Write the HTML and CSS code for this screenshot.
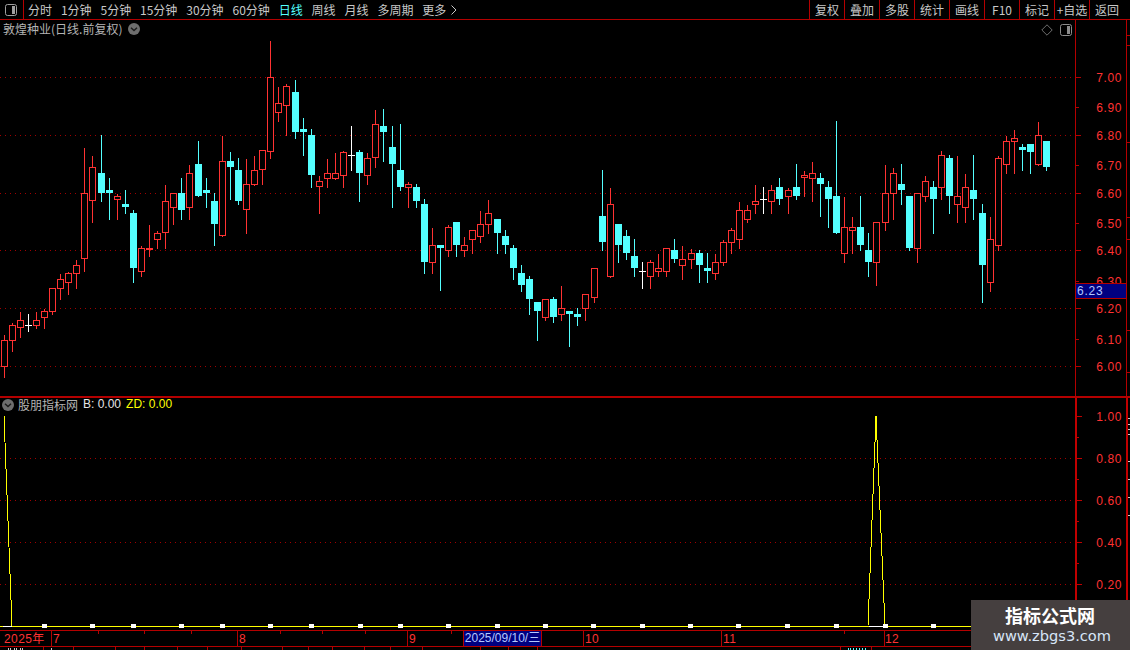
FILE: index.html
```html
<!DOCTYPE html>
<html lang="zh">
<head>
<meta charset="utf-8">
<title>敦煌种业</title>
<link rel="stylesheet" href="styles.css">
</head>
<body>
<div class="app">
  <header class="toolbar">
    <div class="layout-cell">
      <svg class="icon-layout" viewBox="0 0 12 12" width="12" height="12"><rect x="0.5" y="0.5" width="11" height="11" rx="2" fill="none" stroke="#a0a0a0"/><rect x="7" y="2" width="3" height="8" fill="#a0a0a0"/></svg>
    </div>
    <nav class="periods">
      <span class="period">分时</span><span class="period">1分钟</span><span class="period">5分钟</span><span class="period">15分钟</span><span class="period">30分钟</span><span class="period">60分钟</span><span class="period active">日线</span><span class="period">周线</span><span class="period">月线</span><span class="period">多周期</span>
      <span class="period more">更多<svg viewBox="0 0 6 10" width="6" height="10"><path d="M.5.5 5 5 .5 9.5" fill="none" stroke="#c8c8c8"/></svg></span>
    </nav>
    <div class="actions">
      <span class="action">复权</span><span class="action">叠加</span><span class="action">多股</span><span class="action">统计</span><span class="action">画线</span><span class="action">F10</span><span class="action">标记</span><span class="action">+自选</span><span class="action">返回</span>
    </div>
  </header>

  <section class="panel panel-main">
    <div class="plot">
      <svg id="kline" class="canvas" width="1075" height="376"></svg>
      <div class="legend">
        <span class="title">敦煌种业(日线.前复权)</span>
        <svg class="icon-circle" viewBox="0 0 12 12" width="12" height="12"><circle cx="6" cy="6" r="6" fill="#6e6e6e"/><path d="M3 4.8 6 7.6 9 4.8" fill="none" stroke="#1c1c1c" stroke-width="1.4"/></svg>
      </div>
      <div class="plot-tools">
        <svg viewBox="0 0 12 12" width="12" height="12"><path d="M6 .8 11.2 6 6 11.2 .8 6Z" fill="none" stroke="#6e6e6e"/></svg>
        <svg viewBox="0 0 12 12" width="12" height="12"><rect x="0.5" y="0.5" width="11" height="11" rx="2" fill="none" stroke="#8c8c8c"/><rect x="7" y="2" width="3" height="8" fill="#8c8c8c"/></svg>
      </div>
    </div>
    <div class="axis"><svg id="axis-main" class="canvas" width="50" height="376"></svg><div class="price-tag">6.23</div></div>
    <div class="edge"><svg id="edge-main" class="canvas" width="4" height="376"></svg></div>
  </section>

  <section class="panel panel-sub">
    <div class="plot">
      <svg id="indicator" class="canvas" width="1075" height="232"></svg>
      <div class="legend legend-sub">
        <svg class="icon-circle" viewBox="0 0 12 12" width="12" height="12"><circle cx="6" cy="6" r="6" fill="#6e6e6e"/><path d="M3 4.8 6 7.6 9 4.8" fill="none" stroke="#1c1c1c" stroke-width="1.4"/></svg>
        <span class="title">股朋指标网</span>
        <span class="val-b">B: 0.00</span>
        <span class="val-zd">ZD: 0.00</span>
      </div>
    </div>
    <div class="axis"><svg id="axis-sub" class="canvas" width="49" height="232"></svg></div>
    <div class="edge"><svg id="edge-sub" class="canvas" width="3" height="232"></svg></div>
  </section>

  <footer class="timeline">
    <svg id="time-ticks" class="canvas" width="1130" height="15"></svg>
    <div class="date-tag">2025/09/10/三</div>
  </footer>
  <div class="statusbar"><svg id="status" class="canvas" width="1130" height="3"></svg></div>

  <aside class="watermark">
    <div class="wm-title">指标公式网</div>
    <div class="wm-url">www.zbgs3.com</div>
  </aside>
</div>
<script src="chart.js"></script>
</body>
</html>
```
FILE: styles.css
```css
* { box-sizing: border-box; }
html, body { margin: 0; height: 100%; background: #000; overflow: hidden; }
body { font-family: "Noto Sans CJK SC", "Liberation Sans", sans-serif; font-size: 12px; color: #c8c8c8; }
.app { position: relative; width: 1130px; height: 650px; display: flex; flex-direction: column; overflow: hidden; }
.canvas { display: block; }

.toolbar { height: 20px; flex: none; display: flex; border-bottom: 1px solid #b40000; line-height: 19px; }
.layout-cell { width: 24px; flex: none; display: flex; align-items: center; justify-content: center; border-right: 1px solid #b40000; padding-right: 1px; }
.periods { display: flex; flex: 1; padding-left: 4px; gap: 8.9px; white-space: nowrap; }
.period { color: #c8c8c8; }
.period.active { color: #54ffff; }
.period.more { display: flex; align-items: center; gap: 5px; }
.actions { display: flex; flex: none; }
.action { width: 35px; text-align: center; border-left: 1px solid #b40000; white-space: nowrap; }
.action:last-child { width: 41px; padding-right: 6px; }

.panel { flex: none; display: flex; border-bottom: 1px solid #b40000; }
.panel-main { height: 378px; border-bottom-width: 2px; }
.panel-sub { height: 233px; }
.plot { position: relative; width: 1075px; flex: none; }
.axis { position: relative; flex: none; border-left: 1px solid #b40000; border-right: 1px solid #b40000; box-sizing: content-box; width: 50px; }
.panel-sub .axis { border-left-width: 2px; border-right-width: 2px; width: 49px; border-color: #c00000; }
.edge { flex: 1; }

.legend { position: absolute; left: 3px; top: 0; display: flex; align-items: center; gap: 6px; line-height: 17px; }
.legend-sub { left: 2px; top: 0; gap: 0; line-height: 13px; }
.legend-sub .title { margin-left: 4px; }
.legend .title { color: #b4b4b4; }
.val-b { color: #e6e6e6; margin-left: 5px; font-family: "Liberation Sans", sans-serif; }
.val-zd { color: #ffff00; margin-left: 5px; font-family: "Liberation Sans", sans-serif; }
.plot-tools { position: absolute; right: 3px; top: 4px; display: flex; gap: 7px; }

.price-tag { position: absolute; left: 0; right: 0; top: 263px; height: 16px; background: #000080; border-top: 1px solid #b40000; border-bottom: 1px solid #b40000; color: #b4c8ff; line-height: 14px; padding-left: 1px; font-family: "Liberation Sans", sans-serif; letter-spacing: 0.8px; }

.timeline { position: relative; height: 16px; flex: none; border-bottom: 1px solid #b40000; }
.date-tag { position: absolute; left: 463px; top: 0; width: 79px; height: 15px; background: #000080; border-left: 1px solid #b40000; border-right: 1px solid #b40000; color: #b4c8ff; line-height: 15px; text-align: center; white-space: nowrap; font-family: "Liberation Sans", "Noto Sans CJK SC", sans-serif; }
.statusbar { flex: 1; }

.watermark { position: absolute; left: 971px; top: 600px; width: 159px; height: 50px; background: #453f3f; text-align: center; }
.wm-title { color: #fff; font-size: 18px; font-weight: 700; line-height: 20px; margin-top: 5px; padding-right: 1px; }
.wm-url { color: #d8e6f8; font-family: "DejaVu Sans", sans-serif; font-size: 14.6px; line-height: 20px; margin-top: 1px; padding-left: 3px; white-space: nowrap; }
```
FILE: chart.js
```js
var NS = 'http://www.w3.org/2000/svg';
var RED = '#ff3232', CYAN = '#54ffff', WHITE = '#ffffff', LINE = '#b40000', GRID = '#a00000', YELLOW = '#ffff00';

function add(svg, tag, attrs, text) {
  var el = document.createElementNS(NS, tag);
  for (var k in attrs) el.setAttribute(k, attrs[k]);
  if (text) el.textContent = text;
  svg.appendChild(el);
  return el;
}
function hline(svg, x1, x2, y, color, dash) {
  var a = { x1: x1, x2: x2, y1: y + 0.5, y2: y + 0.5, stroke: color, 'shape-rendering': 'crispEdges' };
  if (dash) a['stroke-dasharray'] = dash;
  add(svg, 'line', a);
}
function vline(svg, x, y1, y2, color) {
  add(svg, 'line', { x1: x + 0.5, x2: x + 0.5, y1: y1, y2: y2, stroke: color, 'shape-rendering': 'crispEdges' });
}

/* type, wick top, body top, body bottom, wick bottom; read off the chart in groups */
var groups = [
  { base: 130, rows: 'r 615 630 710 740|r 580 586 632 662|r 546 571 595 620|w 552 585 587 602|r 546 571 587 593|r 537 544 563 593|r 475 475 545 551|r 432 448 476 506|r 427 430 458 491|r 390 406 431 473|r 54 190 388 422|r 78 112 214 275|c 15 129 188 212|c 144 180 189 266|r 192 199 209 266|c 180 222 231 248|c 240 249 414 455|r 348 355 425 437|r 285 355 361 377|r 304 310 329 353|r 165 214 310 353|r 190 190 233 281|c 144 189 240 266|r 105 130 233 266|c 33 102 198 198|c 144 180 189 230|c 190 213 282 344|r 18 94 319 319|c 66 93 111 207|c 84 120 213 222|r 87 163 241 308|r 78 121 164 164|r 61 61 121 161' },
  { base: 40, rows: 'r 3 112 337 353|r 141 190 218 243|r 132 139 199 285|c 120 156 275 293|c 235 267 276 345|c 267 285 404 440|r 408 424 442 519|r 357 400 416 441|r 339 400 416 416|r 333 337 407 441|w 258 345 347 390|c 330 336 399 483|r 339 355 407 432|r 210 253 355 381|c 207 258 276 363|c 258 321 372 501|c 252 390 441 450|r 426 433 443 501|c 432 441 483 501|c 477 492 666 699|r 564 616 668 699|c 615 615 624 750|r 555 562 632 648|c 546 546 615 648|r 591 616 632 648|r 571 571 599 639|r 513 553 590 606|r 480 520 554 579|c 537 537 579 639|c 570 588 615 639|c 615 624 684 717|' },
  { base: 160, rows: 'c 315 339 375 393|c 348 357 417 462|c 426 426 453 540|r 418 418 473 480|c 411 417 471 486|r 378 445 465 480|c 453 453 462 558|c 444 462 471 495|r 403 403 446 480|r 325 325 413 426|c 30 168 246 270|r 84 133 350 350|c 192 192 255 306|c 210 228 279 297|c 237 288 324 348|w 306 333 335 384|r 300 307 350 384|r 282 325 335 348|r 265 265 335 348|c 237 270 297 306|r 258 298 317 357|r 267 280 299 324|c 270 279 315 366|c 279 324 333 366|r 282 307 341 357|r 240 247 308 315|r 204 211 248 279|r 126 151 239 264|r 135 151 179 186|r 75 124 134 159|w 81 117 119 159|r 75 91 125 159|c 54 81 117 132|r 84 91 110 159' },
  { base: 110, rows: 'c 162 231 258 267|r 183 196 205 258|r 156 190 206 273|c 189 204 222 318|c 213 231 267 351|c 33 258 369 369|r 261 352 431 456|r 321 352 362 429|c 258 351 405 420|c 369 420 456 498|r 337 337 458 525|r 165 250 338 360|r 174 190 251 327|c 162 222 240 282|c 258 258 414 420|r 250 250 416 456|r 198 214 260 273|c 213 231 267 369|r 123 136 233 267|c 135 144 258 309|r 138 259 284 336|r 192 232 293 336|c 135 240 267 327|c 282 309 465 576|r 321 388 518 543|r 139 145 407 420|r 78 94 164 189|r 60 85 95 189|c 102 111 120 180|c 102 102 126 189|r 36 76 164 164|c 93 93 171 180' }
];
var jumps = [12, 24, 36, 48, 61, 73, 85, 97, 109, 121];
function xAt(i) {
  var x = 4 + 8 * i;
  jumps.forEach(function (j) { if (i >= j) x++; });
  return x;
}
var candles = [];
groups.forEach(function (g) {
  g.rows.split('|').forEach(function (row) {
    if (!row) return;
    var p = row.split(' ');
    var yy = p.slice(1).map(function (v) { return g.base + Math.round(+v / 3); });
    candles.push({ t: p[0], hi: yy[0], top: yy[1], bot: yy[2], lo: yy[3] });
  });
});

var TOP = 20; /* page y of the main plot's top edge */
var kl = document.getElementById('kline');
[77, 135, 193, 250, 308, 366].forEach(function (y) { hline(kl, 0, 1075, y - TOP, GRID, '1 4'); });
candles.forEach(function (c, i) {
  var x = xAt(i), col = c.t === 'r' ? RED : c.t === 'c' ? CYAN : WHITE;
  var hi = c.hi - TOP, lo = c.lo - TOP, top = c.top - TOP, bot = c.bot - TOP;
  vline(kl, x, hi, lo + 1, col);
  if (c.t === 'c') {
    add(kl, 'rect', { x: x - 3, y: top, width: 7, height: Math.max(bot - top, 1), fill: col, 'shape-rendering': 'crispEdges' });
  } else if (c.t === 'r') {
    add(kl, 'rect', { x: x - 2.5, y: top + 0.5, width: 6, height: Math.max(bot - top - 1, 1), fill: '#000', stroke: col, 'shape-rendering': 'crispEdges' });
  } else {
    hline(kl, x - 3, x + 4, top, col);
  }
});

function axis(id, offset, labels, shift, color) {
  var svg = document.getElementById(id);
  labels.forEach(function (l) {
    hline(svg, 0, l[2] - shift, l[1] - offset, color);
    add(svg, 'text', { x: 46 - shift, y: l[1] - offset + 5, 'text-anchor': 'end', fill: RED, 'font-family': 'Liberation Sans, sans-serif', 'font-size': 12, 'letter-spacing': 0.6 }, l[0]);
  });
}
axis('axis-main', TOP, [['7.00', 77, 5], ['6.90', 107, 3], ['6.80', 135, 5], ['6.70', 165, 3], ['6.60', 193, 5], ['6.50', 223, 3], ['6.40', 250, 5], ['6.30', 281, 3], ['6.20', 308, 5], ['6.10', 339, 3], ['6.00', 366, 5]], 0, LINE);

var edge = document.getElementById('edge-main');
[15, 25, 122, 197, 219, 310, 352].forEach(function (y) { hline(edge, 0, 4, y, LINE); });

var SUB = 398;
var ind = document.getElementById('indicator');
[458, 500, 542, 584].forEach(function (y) { hline(ind, 0, 1075, y - SUB, GRID, '1 4'); });
hline(ind, 0, 1075, 626 - SUB, YELLOW);
hline(ind, 3, 12, 626 - SUB, WHITE);
hline(ind, 869, 885, 626 - SUB, WHITE);
add(ind, 'polyline', { points: '4,' + (416 - SUB) + ' 12,' + (626 - SUB) + ' 868,' + (626 - SUB) + ' 876,' + (416 - SUB) + ' 885,' + (626 - SUB), fill: 'none', stroke: YELLOW, 'stroke-width': 1, 'shape-rendering': 'crispEdges' });
[44, 92, 133, 181, 222, 270, 311, 360, 400, 448, 497, 545, 593, 642, 690, 738, 787, 836, 885, 933].forEach(function (x) {
  add(ind, 'rect', { x: x - 2, y: 624 - SUB, width: 5, height: 4, fill: '#fff', 'shape-rendering': 'crispEdges' });
});
axis('axis-sub', SUB, [['1.00', 416, 6], ['0.80', 458, 6], ['0.60', 500, 6], ['0.40', 542, 6], ['0.20', 584, 6]], 1, '#c00000');
var subAxis = document.getElementById('axis-sub');
[437, 479, 521, 563, 605].forEach(function (y) { hline(subAxis, 0, 2, y - SUB, '#c00000'); });
var edgeSub = document.getElementById('edge-sub');
[418, 424, 429, 434, 461, 479, 497, 515].forEach(function (y) { hline(edgeSub, 0, 3, y - SUB, '#d0d0d0'); });

var tl = document.getElementById('time-ticks');
[51, 237, 407, 583, 721, 884].forEach(function (x) { vline(tl, x, 0, 15, LINE); });
[98, 144, 191, 280, 322, 365, 451, 844].forEach(function (x) { vline(tl, x, 0, 3, LINE); });
[['2025年', 4], ['7', 53], ['8', 239], ['9', 409], ['10', 585], ['11', 723], ['12', 885]].forEach(function (t) {
  add(tl, 'text', { x: t[1], y: 12, fill: RED, 'font-family': 'Liberation Sans, Noto Sans CJK SC, sans-serif', 'font-size': 12, 'letter-spacing': 0.4 }, t[0]);
});

var st = document.getElementById('status');
[43, 73, 115, 144, 177, 207, 241, 282, 308, 332, 364, 390, 422, 480, 508, 537, 840, 871].forEach(function (x) { vline(st, x, 0, 3, LINE); });
[8, 10, 14, 16, 20, 22, 51].forEach(function (x) { vline(st, x, 1, 3, '#c8c8c8'); });
[848, 850, 853, 856, 859, 862, 865].forEach(function (x) { vline(st, x, 1, 3, CYAN); });
```
